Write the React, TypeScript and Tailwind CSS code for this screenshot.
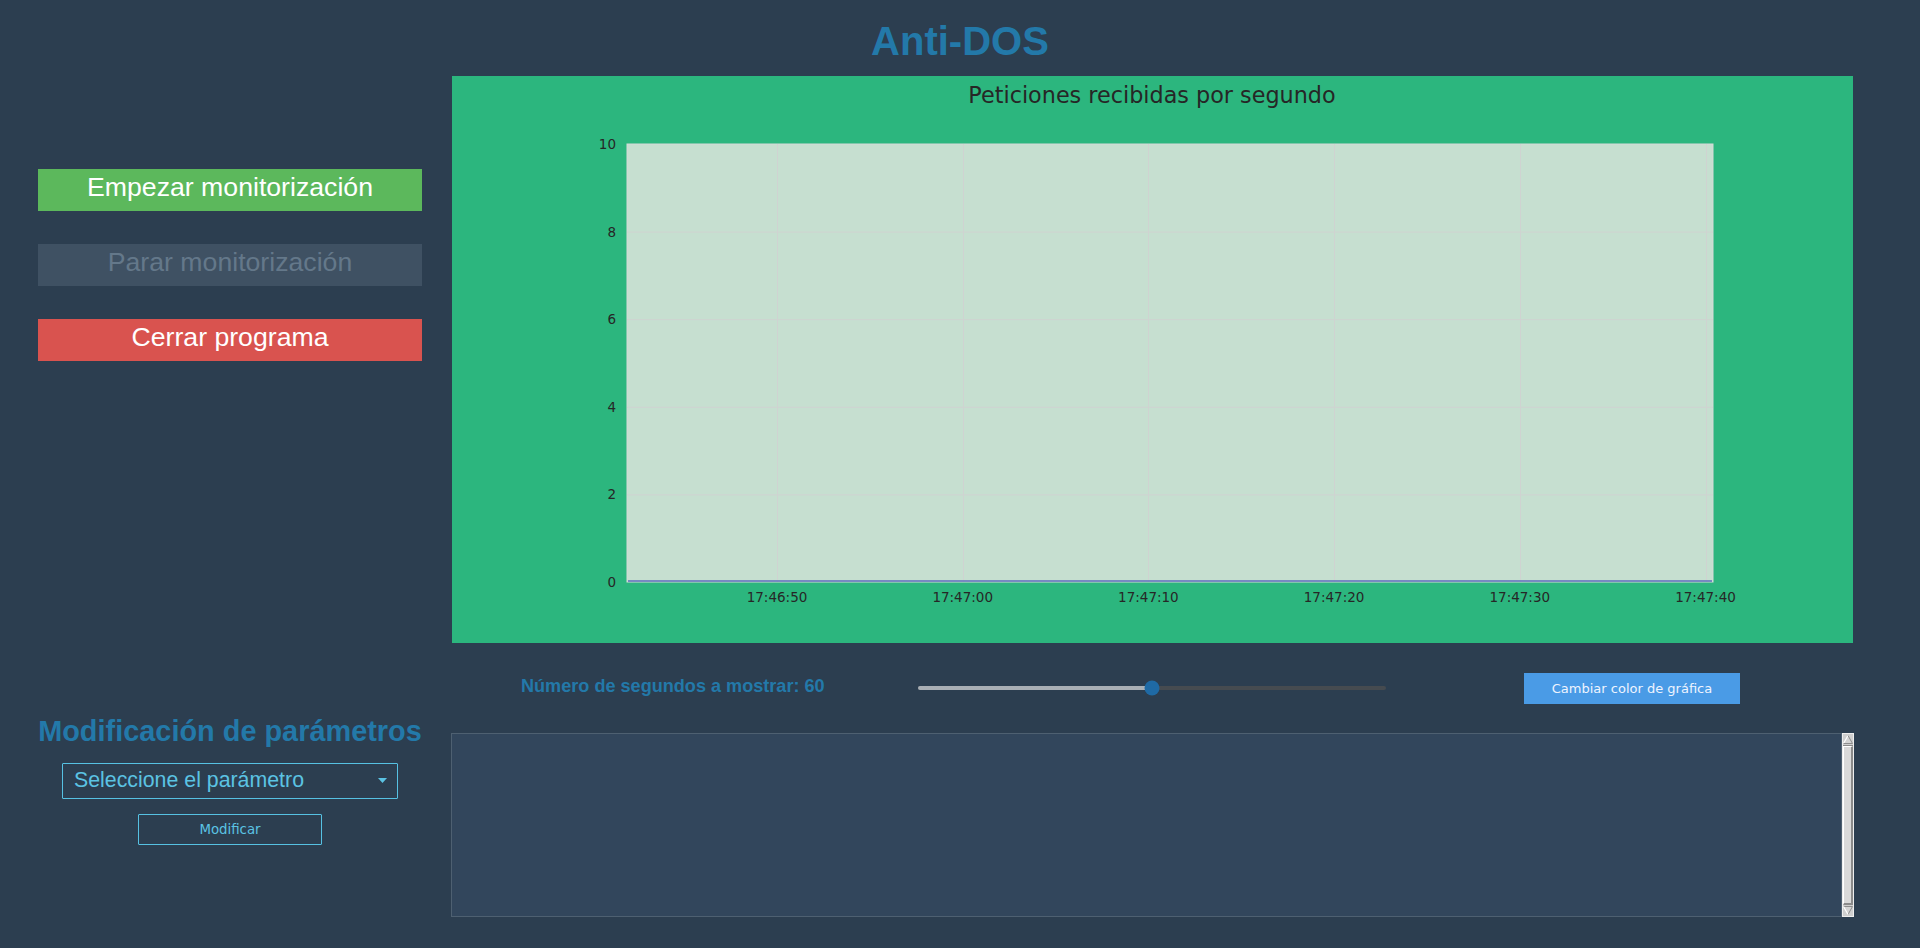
import React from 'react';

const SANS = { fontFamily: '"Liberation Sans", Arial, sans-serif' };
const DEJAVU = { fontFamily: '"DejaVu Sans", Verdana, sans-serif' };

// plot box inside the green panel (px)
const PLOT = { x: 175, y: 68, w: 1086, h: 438 };
const X_TICKS = ['17:46:50', '17:47:00', '17:47:10', '17:47:20', '17:47:30', '17:47:40'];
const Y_TICKS = [0, 2, 4, 6, 8, 10];

const RequestsChart: React.FC = () => {
  const yPos = (v: number) => PLOT.y + PLOT.h - (v / 10) * PLOT.h;
  const xPos = (i: number) => 325 + i * 185.7;

  return (
    <svg width={1401} height={567} className="block" style={DEJAVU}>
      <text x={700} y={27} textAnchor="middle" fontSize={22.3} fill="#262626">
        Peticiones recibidas por segundo
      </text>

      <rect x={PLOT.x} y={PLOT.y} width={PLOT.w} height={PLOT.h} fill="#c6dfd0" stroke="#d6dad8" strokeWidth={1} />

      {Y_TICKS.slice(1, -1).map(v => (
        <line key={`h-${v}`} x1={PLOT.x} x2={PLOT.x + PLOT.w} y1={yPos(v) + 0.5} y2={yPos(v) + 0.5} stroke="#cfd3d1" strokeWidth={1} />
      ))}
      {X_TICKS.map((_, i) => (
        <line key={`v-${i}`} x1={Math.round(xPos(i)) + 0.5} x2={Math.round(xPos(i)) + 0.5} y1={PLOT.y} y2={PLOT.y + PLOT.h} stroke="#cfd3d1" strokeWidth={1} />
      ))}

      {/* data series: flat at zero */}
      <line x1={PLOT.x + 1} x2={PLOT.x + PLOT.w - 1} y1={PLOT.y + PLOT.h - 1} y2={PLOT.y + PLOT.h - 1} stroke="#5b6dbd" strokeWidth={1.6} />

      {Y_TICKS.map(v => (
        <text key={`yl-${v}`} x={164} y={yPos(v) + 1} textAnchor="end" dominantBaseline="middle" fontSize={13.5} fill="#262626">
          {v}
        </text>
      ))}
      {X_TICKS.map((t, i) => (
        <text key={`xl-${t}`} x={xPos(i)} y={522} textAnchor="middle" dominantBaseline="middle" fontSize={13.5} fill="#262626">
          {t}
        </text>
      ))}
    </svg>
  );
};

const TkScrollbar: React.FC = () => (
  <div className="w-[12px] h-full bg-white flex flex-col border border-[#eeeeee]">
    <div className="h-[11px] flex items-center justify-center bg-[#cfcfcf]">
      <svg width="10" height="9" viewBox="0 0 10 9">
        <path d="M5 0.5 L9.5 8.5 L0.5 8.5 Z" fill="#d4d4d4" />
        <path d="M0.5 8.5 L5 0.5" stroke="#ffffff" strokeWidth="1.2" fill="none" />
        <path d="M5 0.5 L9.5 8.5 L0.5 8.5" stroke="#8c8c8c" strokeWidth="1" fill="none" />
      </svg>
    </div>
    <div className="h-[1px] bg-[#8a8a8a]" />
    <div className="flex-1 bg-[#d9d9d9] border-l border-t border-white border-r-2 border-b-2 border-r-[#8a8a8a] border-b-[#8a8a8a]" />
    <div className="h-[11px] flex items-center justify-center bg-[#cfcfcf]">
      <svg width="10" height="9" viewBox="0 0 10 9">
        <path d="M0.5 0.5 L9.5 0.5 L5 8.5 Z" fill="#d4d4d4" />
        <path d="M0.5 0.5 L9.5 0.5 L5 8.5" stroke="#8c8c8c" strokeWidth="1" fill="none" />
        <path d="M0.5 0.5 L5 8.5" stroke="#ffffff" strokeWidth="1.2" fill="none" />
      </svg>
    </div>
  </div>
);

export default function App() {
  const seconds = 60;
  const sliderPct = 50;

  return (
    <div className="min-h-screen w-full bg-[#2c3e50]" style={SANS}>
      {/* Title */}
      <div className="h-[76px] pt-[21px]">
        <h1 className="text-center text-[40px] leading-none font-bold text-[#2379a9]">Anti-DOS</h1>
      </div>

      <div className="flex">
        {/* Left column */}
        <div className="ml-[38px] w-[384px] flex flex-col">
          <div className="h-[567px] pt-[93px] flex flex-col gap-[33px]">
            <button className="h-[42px] w-full pb-[5px] bg-[#5cb85c] text-white text-[26.67px] leading-none flex items-center justify-center">
              Empezar monitorización
            </button>
            <button disabled className="h-[42px] w-full pb-[5px] bg-[#3f5163] text-[#64788a] text-[26.67px] leading-none flex items-center justify-center">
              Parar monitorización
            </button>
            <button className="h-[42px] w-full pb-[5px] bg-[#d9534f] text-white text-[26.67px] leading-none flex items-center justify-center">
              Cerrar programa
            </button>
          </div>

          <div className="flex flex-col items-center">
            <h2 className="mt-[74px] text-[28.9px] leading-none font-bold text-[#2379a9] whitespace-nowrap">
              Modificación de parámetros
            </h2>
            <div className="mt-[17px] w-[336px] h-[36px] border border-[#56c1e2] rounded-[1px] flex items-center justify-between pl-[11px] pr-[10px]">
              <span className="text-[21.33px] leading-none text-[#5bc3e3]">Seleccione el parámetro</span>
              <svg width="9" height="5" viewBox="0 0 9 5">
                <path d="M0 0 L9 0 L4.5 5 Z" fill="#5bc3e3" />
              </svg>
            </div>
            <button
              className="mt-[15px] w-[184px] h-[31px] border border-[#56c1e2] rounded-[1px] text-[13.33px] leading-none text-[#5bc3e3] flex items-center justify-center"
              style={DEJAVU}
            >
              Modificar
            </button>
          </div>
        </div>

        {/* Right column */}
        <div className="ml-[30px] w-[1402px] flex flex-col">
          <div className="w-[1401px] h-[567px] bg-[#2cb67e]">
            <RequestsChart />
          </div>

          <div className="h-[90px] flex items-center">
            <div className="pl-[69px] pb-[4px] w-[466px] text-[18.1px] leading-none font-bold text-[#2379a9] whitespace-nowrap">
              Número de segundos a mostrar: {seconds}
            </div>
            <div className="relative w-[468px] h-[16px] flex items-center">
              <div className="h-[4px] w-full rounded-full bg-[#464b50] overflow-hidden flex">
                <div className="h-full bg-[#a9afb5]" style={{ width: `${sliderPct}%` }} />
              </div>
              <div
                className="absolute top-1/2 w-[15px] h-[15px] -translate-x-1/2 -translate-y-1/2 rounded-full bg-[#1f6aa5]"
                style={{ left: `${sliderPct}%` }}
              />
            </div>
            <button
              className="ml-[138px] w-[216px] h-[31px] bg-[#4a9be6] text-[#eef4ff] text-[13px] leading-none flex items-center justify-center"
              style={DEJAVU}
            >
              Cambiar color de gráfica
            </button>
          </div>

          <div className="h-[184px] w-[1403px] -ml-[1px] flex">
            <div className="flex-1 bg-[#32465c] border border-[#4e6071]" />
            <TkScrollbar />
          </div>
        </div>
      </div>
    </div>
  );
}
